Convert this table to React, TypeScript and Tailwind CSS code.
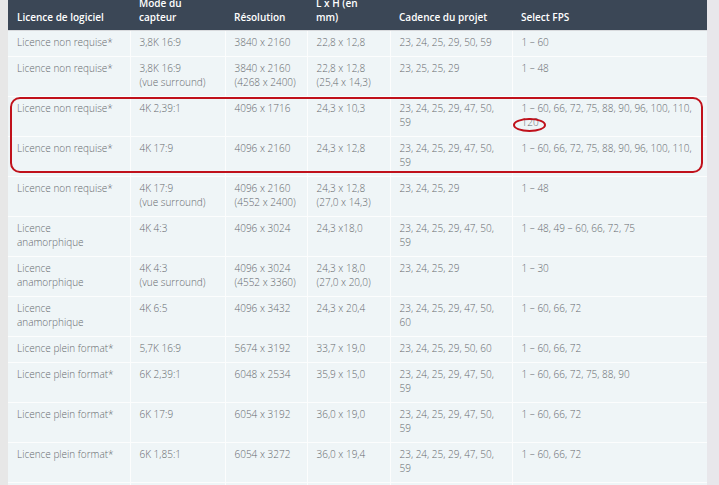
import React from "react";

type Row = string[][];

const rows: Row[] = [
  [["Licence non requise*"], ["3,8K 16:9"], ["3840 x 2160"], ["22,8 x 12,8"], ["23, 24, 25, 29, 50, 59"], ["1 – 60"]],
  [["Licence non requise*"], ["3,8K 16:9", "(vue surround)"], ["3840 x 2160", "(4268 x 2400)"], ["22,8 x 12,8", "(25,4 x 14,3)"], ["23, 25, 25, 29"], ["1 – 48"]],
  [["Licence non requise*"], ["4K 2,39:1"], ["4096 x 1716"], ["24,3 x 10,3"], ["23, 24, 25, 29, 47, 50,", "59"], ["1 – 60, 66, 72, 75, 88, 90, 96, 100, 110,", "120"]],
  [["Licence non requise*"], ["4K 17:9"], ["4096 x 2160"], ["24,3 x 12,8"], ["23, 24, 25, 29, 47, 50,", "59"], ["1 – 60, 66, 72, 75, 88, 90, 96, 100, 110,"]],
  [["Licence non requise*"], ["4K 17:9", "(vue surround)"], ["4096 x 2160", "(4552 x 2400)"], ["24,3 x 12,8", "(27,0 x 14,3)"], ["23, 24, 25, 29"], ["1 – 48"]],
  [["Licence", "anamorphique"], ["4K 4:3"], ["4096 x 3024"], ["24,3 x18,0"], ["23, 24, 25, 29, 47, 50,", "59"], ["1 – 48, 49 – 60, 66, 72, 75"]],
  [["Licence", "anamorphique"], ["4K 4:3", "(vue surround)"], ["4096 x 3024", "(4552 x 3360)"], ["24,3 x 18,0", "(27,0 x 20,0)"], ["23, 24, 25, 29"], ["1 – 30"]],
  [["Licence", "anamorphique"], ["4K 6:5"], ["4096 x 3432"], ["24,3 x 20,4"], ["23, 24, 25, 29, 47, 50,", "60"], ["1 – 60, 66, 72"]],
  [["Licence plein format*"], ["5,7K 16:9"], ["5674 x 3192"], ["33,7 x 19,0"], ["23, 24, 25, 29, 50, 60"], ["1 – 60, 66, 72"]],
  [["Licence plein format*"], ["6K 2,39:1"], ["6048 x 2534"], ["35,9 x 15,0"], ["23, 24, 25, 29, 47, 50,", "59"], ["1 – 60, 66, 72, 75, 88, 90"]],
  [["Licence plein format*"], ["6K 17:9"], ["6054 x 3192"], ["36,0 x 19,0"], ["23, 24, 25, 29, 47, 50,", "59"], ["1 – 60, 66, 72"]],
  [["Licence plein format*"], ["6K 1,85:1"], ["6054 x 3272"], ["36,0 x 19,4"], ["23, 24, 25, 29, 47, 50,", "59"], ["1 – 60, 66, 72"]],
  [["Licence plein format*"], ["6K 3:2"], ["6054 x 4032"], ["36,0 x 24,0"], ["23, 24, 25, 29, 47, 50,", "59"], ["1 – 60, 66, 72"]],
];

const headers: string[][] = [
  ["Licence de logiciel"],
  ["Mode du", "capteur"],
  ["Résolution"],
  ["L x H (en", "mm)"],
  ["Cadence du projet"],
  ["Select FPS"],
];

const widths = ["w-[122px]", "w-[95px]", "w-[82px]", "w-[83px]", "w-[122px]", "w-[195px]"];

export default function App() {
  return (
    <div
      className="flex w-[719px] h-[485px] overflow-hidden bg-[#e8e8e8]"
      style={{ fontFamily: '"Open Sans", "Liberation Sans", sans-serif' }}
    >
      <div className="w-[8px] shrink-0 bg-[#e7e7e7]" />
      <div className="relative w-[699px] shrink-0 bg-[#eff5f7]">
        <table className="-mt-[6px] w-[699px] table-fixed border-collapse">
          <thead>
            <tr className="bg-[#3b4756]">
              {headers.map((h, i) => (
                <th
                  key={i}
                  className={`${widths[i]} px-[9px] pt-[2px] pb-[6px] text-left align-bottom text-[10px] font-semibold leading-[14px] text-white whitespace-nowrap`}
                >
                  {h.map((l, j) => (
                    <div key={j}>{l}</div>
                  ))}
                </th>
              ))}
            </tr>
          </thead>
          <tbody>
            {rows.map((r, ri) => (
              <tr key={ri} className="border-t border-white/80">
                {r.map((c, ci) => (
                  <td
                    key={ci}
                    className="border-l border-white/80 first:border-l-0 px-[9px] pt-[4px] pb-[7px] align-top text-[10px] font-light leading-[14px] text-[#666a6e] whitespace-nowrap"
                  >
                    {c.map((l, j) => (
                      <div key={j}>{l}</div>
                    ))}
                  </td>
                ))}
              </tr>
            ))}
          </tbody>
        </table>
        <div className="pointer-events-none absolute left-[2px] top-[97px] h-[76px] w-[693px] rounded-[10px] border-2 border-[#c0111b]" />
        <div className="pointer-events-none absolute left-[505px] top-[118px] h-[14px] w-[33px] rounded-[50%] border-2 border-[#c0111b]" />
      </div>
      <div className="flex-1 bg-[#e8e7eb]" />
    </div>
  );
}
